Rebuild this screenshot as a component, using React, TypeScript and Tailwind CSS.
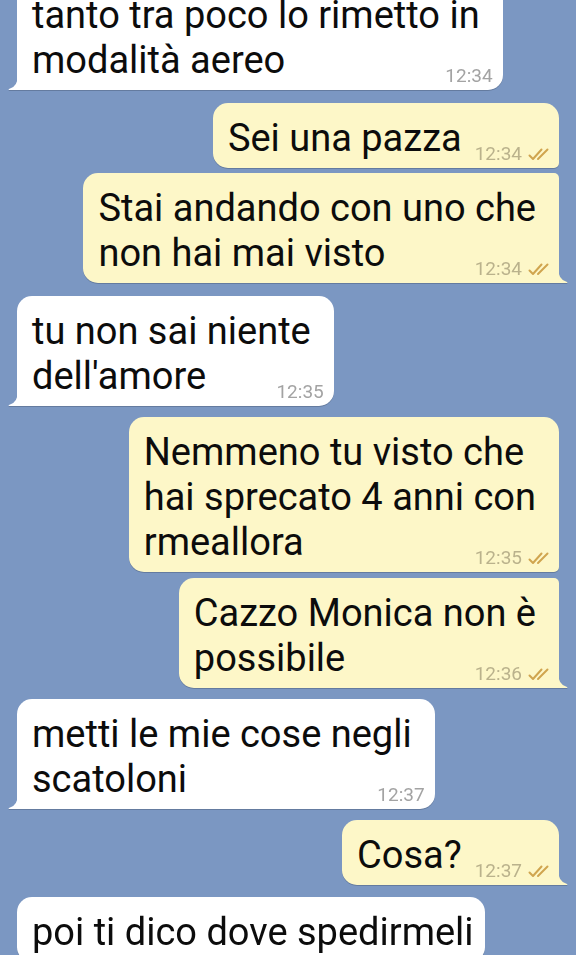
import React from 'react';

type Msg = {
  out: boolean;
  lines: string[];
  time?: string;
  gap: number;
  tail: boolean;
  first: boolean;
};

const messages: Msg[] = [
  { out: false, lines: ['tanto tra poco lo rimetto in', 'modalità aereo'], time: '12:34', gap: -20, tail: true, first: true },
  { out: true, lines: ['Sei una pazza'], time: '12:34', gap: 13, tail: false, first: true },
  { out: true, lines: ['Stai andando con uno che', 'non hai mai visto'], time: '12:34', gap: 5, tail: true, first: false },
  { out: false, lines: ['tu non sai niente', "dell'amore"], time: '12:35', gap: 13, tail: true, first: true },
  { out: true, lines: ['Nemmeno tu visto che', 'hai sprecato 4 anni con', 'rmeallora'], time: '12:35', gap: 11, tail: false, first: true },
  { out: true, lines: ['Cazzo Monica non è', 'possibile'], time: '12:36', gap: 6, tail: true, first: false },
  { out: false, lines: ['metti le mie cose negli', 'scatoloni'], time: '12:37', gap: 11, tail: true, first: true },
  { out: true, lines: ['Cosa?'], time: '12:37', gap: 11, tail: true, first: true },
  { out: false, lines: ['poi ti dico dove spedirmeli'], gap: 12, tail: false, first: true },
];

// double tick shown on sent messages
const Ticks = () => (
  <svg width="21" height="13" viewBox="0 0 21 13" className="mb-[4px]" fill="none">
    <path d="M1.5 7.5 L5 11 L13.5 1.5" stroke="#d0a54f" strokeWidth="2" strokeLinecap="round" strokeLinejoin="round" />
    <path d="M10 11 L19.5 1.5" stroke="#d0a54f" strokeWidth="2" strokeLinecap="round" />
  </svg>
);

const Tail = ({ out }: { out: boolean }) =>
  out ? (
    <svg width="10" height="16" viewBox="0 0 10 16" className="absolute bottom-0 right-[-9px]">
      <path d="M0 0 Q0 13 9 15 Q10 15.5 9 16 L0 16 Z" fill="#fdf7c8" />
    </svg>
  ) : (
    <svg width="10" height="16" viewBox="0 0 10 16" className="absolute bottom-0 left-[-9px]">
      <path d="M10 0 Q10 13 1 15 Q0 15.5 1 16 L10 16 Z" fill="#ffffff" />
    </svg>
  );

const Bubble = ({ m }: { m: Msg }) => {
  let radius = 'rounded-[15px]';
  if (m.out) {
    const tr = m.first ? 'rounded-tr-[15px]' : 'rounded-tr-[5px]';
    const br = m.tail ? 'rounded-br-none' : 'rounded-br-[5px]';
    radius = `rounded-tl-[15px] rounded-bl-[15px] ${tr} ${br}`;
  } else {
    const bl = m.tail ? 'rounded-bl-none' : 'rounded-bl-[15px]';
    radius = `rounded-tl-[15px] rounded-tr-[15px] rounded-br-[15px] ${bl}`;
  }
  const head = m.lines.slice(0, -1);
  const last = m.lines[m.lines.length - 1];

  return (
    <div className={`flex ${m.out ? 'justify-end' : 'justify-start'}`} style={{ marginTop: m.gap }}>
      <div className="relative drop-shadow-[0_1px_0.5px_rgba(0,0,0,0.18)]">
        <div
          className={`${m.out ? 'bg-[#fdf7c8]' : 'bg-white'} ${radius} pl-[15px] ${m.time ? 'pr-[10px]' : 'pr-[11px]'} pt-[13px] pb-[7px] text-[38px] leading-[45px] text-[#0c0c0c] whitespace-nowrap`}
        >
          {head.map((l, i) => (
            <div key={i} className="pr-[13px]">
              {l}
            </div>
          ))}
          <div className="flex items-baseline">
            <span>{last}</span>
            {m.time && (
              <span className="ml-auto pl-[13px] inline-flex items-end gap-[6px] translate-y-[9px]">
                <span className={`text-[19px] leading-[22px] ${m.out ? 'text-[#bab28c]' : 'text-[#a3a3a3]'}`}>
                  {m.time}
                </span>
                {m.out && <Ticks />}
              </span>
            )}
          </div>
        </div>
        {m.tail && <Tail out={m.out} />}
      </div>
    </div>
  );
};

export default function App() {
  return (
    <div
      className="h-[955px] w-[576px] overflow-hidden bg-[#7b97c2] px-[17px]"
      style={{ fontFamily: 'Roboto, "Noto Sans", sans-serif' }}
    >
      <div className="flex flex-col">
        {messages.map((m, i) => (
          <Bubble key={i} m={m} />
        ))}
      </div>
    </div>
  );
}
